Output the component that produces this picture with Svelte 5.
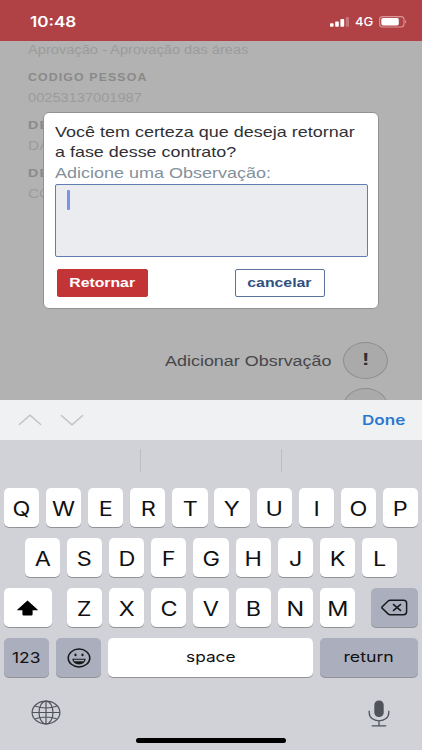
<script>
  const rowOne = [...'QWERTYUIOP'];
  const rowTwo = [...'ASDFGHJKL'];
  const rowThree = [...'ZXCVBNM'];

  // Widens a label horizontally until it spans the given number of pixels.
  function span(node, width) {
    node.style.transform = `scaleX(${width / node.offsetWidth})`;
  }
</script>

<div class="screen">
  <header class="status">
    <span class="clock wide" use:span={46}>10:48</span>
    <div class="signals">
      <svg width="20" height="10" viewBox="0 0 20 10">
        <rect x="0" y="6.2" width="3.6" height="3.6" rx="0.8" fill="#fff" />
        <rect x="5.2" y="4.4" width="3.6" height="5.4" rx="0.8" fill="#fff" />
        <rect x="10.4" y="2" width="3.8" height="7.8" rx="0.8" fill="#fff" />
        <rect x="15.8" y="0" width="3.2" height="9.8" rx="0.8" fill="#c87579" />
      </svg>
      <span class="network"><span class="wide" use:span={18.5}>4G</span></span>
      <svg width="29" height="12" viewBox="0 0 29 12">
        <rect x="0.6" y="0.6" width="24.4" height="10.4" rx="3" fill="none" stroke="#d79698" stroke-width="1.1" />
        <rect x="2.3" y="2.1" width="17.5" height="7.4" rx="1.7" fill="#fff" />
        <path d="M26.1 4.1c1.6.5 1.6 2.9 0 3.4z" fill="#d79698" />
      </svg>
    </div>
  </header>

  <main class="page">
    <div class="details">
      <p><span class="wide" use:span={220}>Aprovação - Aprovação das áreas</span></p>
      <h4><span class="wide" use:span={120}>CODIGO PESSOA</span></h4>
      <p><span class="wide" use:span={113.5}>00253137001987</span></p>
      <h4><span class="wide" use:span={22}>DE</span></h4>
      <p><span class="wide" use:span={21}>DA</span></p>
      <h4><span class="wide" use:span={22}>DE</span></h4>
      <p><span class="wide" use:span={23}>CO</span></p>
    </div>

    <div class="action">
      <span class="action-label wide" use:span={166.5}>Adicionar Obsrvação</span>
      <div class="rounds">
        <div class="round"><span>!</span></div>
        <div class="round"></div>
      </div>
    </div>

    <section class="dialog">
      <div class="line"><span class="wide" use:span={299.5}>Você tem certeza que deseja retornar</span></div>
      <div class="line"><span class="wide" use:span={181.5}>a fase desse contrato?</span></div>
      <div class="line hint"><span class="wide" use:span={216}>Adicione uma Observação:</span></div>
      <div class="field"><i class="caret"></i></div>
      <div class="buttons">
        <button class="primary"><span class="wide mid" use:span={65.5}>Retornar</span></button>
        <button class="outline"><span class="wide mid" use:span={64.5}>cancelar</span></button>
      </div>
    </section>
  </main>

  <div class="toolbar">
    <svg width="66" height="12" viewBox="0 0 66 12" fill="none" stroke="#c1c2c5" stroke-width="1.4">
      <path d="M1 10.8 12 1.2 23 10.8" />
      <path d="M43 1.2 54 10.8 65 1.2" />
    </svg>
    <span class="done"><span class="wide" use:span={43}>Done</span></span>
  </div>

  <div class="keyboard">
    <div class="suggestions"><i></i><i></i><i></i></div>
    <div class="row">
      {#each rowOne as letter}<div class="key"><span>{letter}</span></div>{/each}
    </div>
    <div class="row">
      {#each rowTwo as letter}<div class="key"><span>{letter}</span></div>{/each}
    </div>
    <div class="row edges">
      <div class="key side">
        <svg width="23" height="16" viewBox="0 0 23 16">
          <path d="M11.5.6 21.8 9.7q.5.6-.4.6H16.6v4q0 1.2-1.3 1.2H7.7q-1.3 0-1.3-1.2v-4H1.6q-.9 0-.4-.6z" fill="#000" />
        </svg>
      </div>
      <div class="row">
        {#each rowThree as letter}<div class="key"><span>{letter}</span></div>{/each}
      </div>
      <div class="key side dark">
        <svg width="27" height="17" viewBox="0 0 27 17" fill="none" stroke="#17181c" stroke-width="1.5" stroke-linejoin="round">
          <path d="M9.2 1.2H22.5Q25.6 1.2 25.6 4V12.8Q25.6 15.7 22.5 15.7H9.2Q8 15.7 7.1 14.9L1.2 9.2Q.5 8.5 1.2 7.7L7.1 2Q8 1.2 9.2 1.2Z" />
          <path d="M12 5.2 20 11.8M20 5.2 12 11.8" />
        </svg>
      </div>
    </div>
    <div class="row edges">
      <div class="key dark num"><span class="word wide mid" use:span={29}>123</span></div>
      <div class="key dark num">
        <svg width="24" height="20" viewBox="0 0 24 20">
          <ellipse cx="12" cy="10" rx="10.8" ry="8.9" fill="none" stroke="#17181c" stroke-width="1.5" />
          <ellipse cx="8.5" cy="6.9" rx="1.1" ry="1.3" fill="#17181c" />
          <ellipse cx="15.5" cy="6.9" rx="1.1" ry="1.3" fill="#17181c" />
          <path d="M5.3 10.8H18.7C18.3 14.4 15.6 16.4 12 16.4S5.7 14.4 5.3 10.8Z" fill="#17181c" />
          <path d="M6.7 11.7H17.3L16.8 13.2H7.2Z" fill="#abb0be" />
        </svg>
      </div>
      <div class="key space"><span class="word wide mid" use:span={50}>space</span></div>
      <div class="key dark return"><span class="word wide mid" use:span={50}>return</span></div>
    </div>
    <footer class="bottom">
      <svg width="30" height="25" viewBox="0 0 30 25" fill="none" stroke="#50535a" stroke-width="1.2">
        <ellipse cx="15" cy="12.5" rx="13.9" ry="11.4" />
        <ellipse cx="15" cy="12.5" rx="7" ry="11.4" />
        <path d="M15 1.1V23.9M1.1 12.5H28.9M4.3 6.3Q15 9.7 25.7 6.3M4.3 18.7Q15 15.3 25.7 18.7" />
      </svg>
      <svg width="22" height="27" viewBox="0 0 22 27" fill="none" stroke="#50535a" stroke-width="1.3">
        <rect x="6.3" y="0.5" width="9.4" height="16.6" rx="4.5" fill="#50535a" stroke="none" />
        <path d="M1.2 10.8V12.5C1.2 17.6 5.4 20.8 11 20.8S20.8 17.6 20.8 12.5V10.8M11 20.8V25.6M3.8 25.8H18.2" />
      </svg>
    </footer>
    <div class="home"></div>
  </div>
</div>

<style>
  :global(body) {
    margin: 0;
  }

  .screen {
    width: 422px;
    height: 750px;
    display: flex;
    flex-direction: column;
    overflow: hidden;
    background: #b2b2b2;
    font-family: 'Liberation Sans', Arial, sans-serif;
  }

  .screen * {
    box-sizing: border-box;
  }

  .wide {
    display: inline-block;
    white-space: nowrap;
    transform-origin: left center;
  }

  .mid {
    transform-origin: center;
  }

  .status {
    height: 41px;
    flex: none;
    display: flex;
    justify-content: space-between;
    align-items: flex-start;
    padding: 13px 14.5px 0 30px;
    background: #b04246;
    color: #fff;
    font-family: Inter, 'Liberation Sans', sans-serif;
  }

  .clock {
    font-size: 14.5px;
    line-height: 18px;
    font-weight: 600;
  }

  .signals {
    display: flex;
    align-items: center;
    height: 17px;
  }

  .network {
    width: 18.5px;
    margin: 1px 5px 0 5px;
    font-size: 12px;
    line-height: 16px;
    font-weight: 500;
  }

  .page {
    position: relative;
    height: 359px;
    flex: none;
    overflow: hidden;
  }

  .details {
    padding-left: 27.5px;
    color: #9b9b9b;
  }

  .details p,
  .details h4 {
    margin: 0;
    font-size: 12.5px;
    line-height: 18px;
    font-weight: 400;
  }

  .details h4 {
    margin-top: 9px;
    padding-bottom: 3px;
    color: #8a8a8a;
    font-size: 11px;
    font-weight: 700;
    letter-spacing: 1px;
  }

  .action {
    display: flex;
    align-items: flex-start;
    justify-content: space-between;
    margin-top: 138.5px;
    padding: 0 34px 0 165px;
  }

  .action-label {
    margin-top: 9px;
    width: max-content;
    color: #47474b;
    font-size: 15.3px;
    line-height: 20px;
  }

  .rounds {
    display: flex;
    flex-direction: column;
    gap: 9px;
  }

  .round {
    width: 45px;
    height: 37px;
    flex: none;
    display: flex;
    align-items: center;
    justify-content: center;
    border: 1px solid #8e8e8e;
    border-radius: 50%;
    background: #aaa;
    color: #303034;
    font-size: 16.5px;
    font-weight: 700;
  }

  .round span {
    transform: translateY(-1px) scaleX(1.35);
  }

  .dialog {
    position: absolute;
    top: 70.5px;
    left: 43px;
    width: 336px;
    height: 197px;
    padding: 9px 11px 0;
    border: 1px solid #929292;
    border-radius: 6px;
    background: #fff;
  }

  .line {
    height: 20.6px;
    color: #303136;
    font-size: 15px;
    line-height: 20.6px;
  }

  .hint {
    color: #83919c;
  }

  .field {
    width: 312.5px;
    height: 73px;
    margin-top: 0.4px;
    padding: 5px 0 0 11px;
    border: 1.5px solid #607db2;
    border-radius: 2px;
    background: #ebecef;
  }

  .caret {
    display: block;
    width: 3px;
    height: 20px;
    border-radius: 1px;
    background: #7893eb;
  }

  .buttons {
    display: flex;
    gap: 87px;
    margin: 12px 0 0 2px;
  }

  button {
    width: 90.5px;
    height: 28px;
    padding: 0;
    border: 1px solid #c33437;
    border-radius: 2px;
    background: #c33437;
    color: #fff;
    font: 700 13.5px 'Liberation Sans', Arial, sans-serif;
  }

  button.outline {
    border-color: #5c7399;
    background: #fff;
    color: #30507f;
  }

  .toolbar {
    height: 40px;
    flex: none;
    display: flex;
    align-items: center;
    justify-content: space-between;
    padding: 0 18px;
    background: #f0f1f2;
  }

  .done {
    width: 42px;
    color: #2878d0;
    font: 600 13.5px Inter, 'Liberation Sans', sans-serif;
  }

  .keyboard {
    flex: 1;
    display: flex;
    flex-direction: column;
    background: #d1d2d8;
  }

  .suggestions {
    height: 48px;
    flex: none;
    display: flex;
    align-items: flex-start;
    padding-top: 9px;
  }

  .suggestions i {
    flex: 1;
    height: 23px;
  }

  .suggestions i + i {
    border-left: 1px solid #bcbdc3;
  }

  .row {
    display: flex;
    justify-content: center;
    gap: 6.95px;
  }

  .keyboard > .row {
    height: 39px;
    flex: none;
    margin-bottom: 11px;
  }

  .edges {
    justify-content: space-between;
    padding: 0 4px;
    gap: 0;
  }

  .key {
    width: 35.2px;
    height: 39px;
    flex: none;
    display: flex;
    align-items: center;
    justify-content: center;
    border-radius: 5px;
    background: #fff;
    box-shadow: 0 1px 0 #929399;
    color: #111;
    font: 400 19.5px Inter, 'Liberation Sans', sans-serif;
  }

  .key > span:not(.word) {
    transform: translateY(0.5px) scaleX(1.2);
  }

  .side {
    width: 47.5px;
  }

  .dark {
    background: #abafbd;
  }

  .num {
    width: 45.3px;
  }

  .space {
    width: 205px;
  }

  .return {
    width: 98px;
  }

  .key .word {
    margin-top: -2px;
    font-size: 14.5px;
    line-height: 20px;
  }

  .num .word {
    margin-top: 0;
    font-size: 15px;
  }

  .bottom {
    display: flex;
    justify-content: space-between;
    align-items: flex-start;
    padding: 11.5px 32px 0 31px;
    height: 49.5px;
    flex: none;
  }

  .home {
    width: 150px;
    height: 5px;
    flex: none;
    align-self: center;
    border-radius: 3px;
    background: #000;
  }
</style>
